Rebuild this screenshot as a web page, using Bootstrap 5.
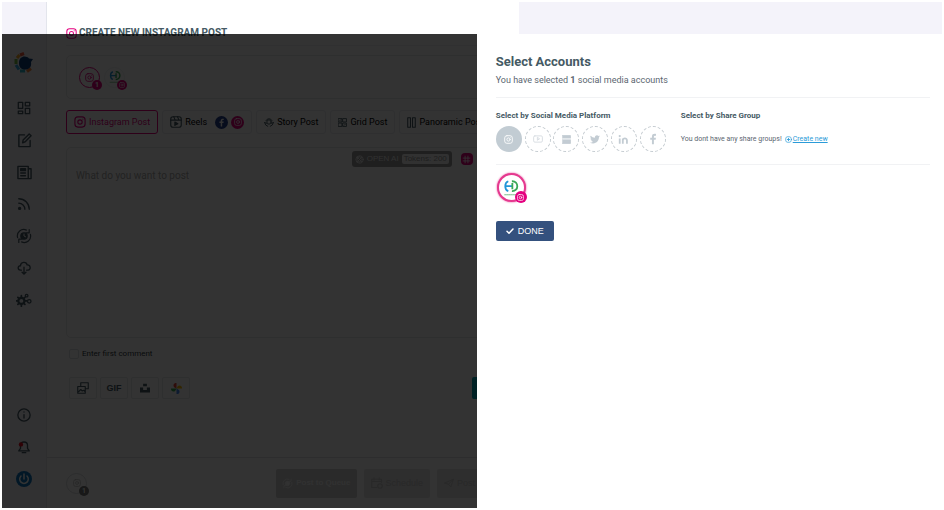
<!DOCTYPE html>
<html lang="en">
<head>
<meta charset="utf-8">
<meta name="viewport" content="width=device-width, initial-scale=1">
<title>Create new Instagram post</title>
<link href="https://cdn.jsdelivr.net/npm/bootstrap@5.3.0/dist/css/bootstrap.min.css" rel="stylesheet">
<style>
:root{--ink:#455a64;--pink:#e4007f;--line:#e6e8ea;--pale:#c3ccd3}
body{font-family:Roboto,"Liberation Sans",sans-serif;font-size:9px;color:#5b6670;padding:2px;background:#fff;line-height:12px}
svg{display:block;fill:none;stroke:currentColor;stroke-width:1.5;stroke-linecap:round;stroke-linejoin:round;flex:none}
button{font:inherit}
.shell{min-height:calc(100vh - 4px);background:#f4f3fa}
.side{width:44px;flex:none;padding:50px 0 13px;color:var(--ink)}
.side a{color:inherit;height:32px;width:100%}
.side .brandmark{height:22px;margin-bottom:18px}
.composer{flex:0 0 50.3%;min-width:0;overflow:hidden;background:#fff;border-left:1px solid #e3e5ec;padding:24px 0 0 19px}
.page-title{font-size:10px;line-height:14px;font-weight:700;color:var(--ink);margin:0;gap:2px;padding-bottom:5px;border-bottom:1px solid #f1f1f4}
.picked{height:44px;margin-top:9px;border:1px solid var(--line);border-radius:5px;padding:0 12px;gap:4px}
.ring{width:21px;height:21px;border:1px solid var(--pink);color:var(--pink);border-radius:50%}
.ring.plain{border-color:#eef0f2}
.dot{width:10px;height:10px;border-radius:50%;background:var(--pink);color:#fff;font-size:7px;line-height:10px;right:-3px;bottom:-3px}
.kinds{margin-top:11px;gap:4px}
.kind{height:24px;flex:none;border:1px solid #e9ebee;border-radius:3px;background:#fff;color:#000;padding:0 7px;gap:3px;white-space:nowrap}
.kind.on{border-color:var(--pink);color:var(--pink)}
.kind svg{color:var(--ink)}
.kind.on svg{color:var(--pink)}
.tag{width:13px;height:13px;border-radius:50%;background:var(--pink)}
.tag.fb{background:#25408f;margin-left:5px}
.kind .tag svg{color:#fff}
.editor{margin-top:13px;height:191px;border:1px solid var(--line);border-radius:5px}
.editor textarea{border:0;padding:22px 9px;font-size:10px;line-height:12px;resize:none;background:none;outline:0;color:#444}
.editor textarea::placeholder{color:#aaa;opacity:1}
.tools{right:45px;top:3px;gap:9px}
.ai{height:16px;border:0;border-radius:3px;background:#9a9a9a;color:#eee;padding:0 3px;gap:3px;font-family:"Liberation Sans",Arial,sans-serif;font-size:8px}
.tokens{background:#f4f4f4;color:#999;border-radius:2px;padding:0 2px;line-height:10px}
.hash{width:12px;height:12px;border:0;border-radius:4px;background:var(--pink);color:#fff}
.first{margin-top:10px;gap:3px;padding-left:3px;font-size:8px;color:#303a42}
.first input{width:10px;height:10px;margin:0;border:1px solid #dcdfe3;border-radius:2px;background:none}
.attach{margin-top:17px;gap:3px;padding-left:3px;color:var(--ink)}
.attach button{width:28px;height:22px;border:1px solid var(--line);border-radius:2px;background:#fff;color:inherit;font:bold 9px "Liberation Sans",Arial,sans-serif}
.attach .go{background:#00a3b4;border:0;width:47px;margin-left:auto}
.foot{border-top:1px solid #dfe1e5;height:51px;margin-left:-19px;padding-left:19px}
.foot .ring{border-color:#d9dcdf;color:#bbb}
.foot .dot{background:#777}
.send{gap:7px;margin-left:auto;width:243px;font-family:"Liberation Sans",Arial,sans-serif}
.send button{height:29px;border:0;border-radius:2px;background:#e4e4e4;color:#c7c7c7;gap:3px;flex:0 0 66px;white-space:nowrap}
.send .queue{background:#d0d0d0;color:#f4f4f4;flex-basis:81px;font-weight:bold;font-size:8px}
.shade{top:32px;left:0;right:0;bottom:0;background:rgba(0,0,0,.8)}
.drawer{top:32px;right:0;bottom:0;width:49.5%;background:#fff;padding:20px 12px 12px 19px}
.drawer h1{font-size:13px;line-height:16px;font-weight:700;color:var(--ink);margin:0 0 4px}
.drawer p{margin:0}
.drawer h2{font-size:8px;line-height:12px;font-weight:700;color:var(--ink);margin:0}
.rule{border-top:1px solid #f1f2f4}
.filters{margin-top:11px;padding:12px 0}
.platforms{width:170px;margin-top:4px}
.platforms button{width:26px;height:26px;border:1px dashed #c3cacf;border-radius:50%;background:none;color:var(--pale);padding:0}
.platforms .on{background:#c2ccd3;border:0;color:#fff}
.share{padding-left:15px}
.share p{font-size:7px;line-height:10px;margin-top:12px;gap:3px}
.share a{color:#2b9bd8;gap:1px}
.account{width:29px;height:29px;border:2px solid #e5398f;border-radius:50%;box-shadow:0 0 2px #e5398f;background:#fff;margin:8px 0 0 1px;padding:0}
.account .dot{width:12px;height:12px;right:-3px;bottom:-3px}
.done{height:20px;width:58px;border:0;border-radius:2px;background:#34517e;color:#fff;font-family:"Liberation Sans",Arial,sans-serif;margin-top:19px;gap:4px}
</style>
</head>
<body>
<svg class="d-none" aria-hidden="true">
<symbol id="ig" viewBox="0 0 16 16"><rect x="1.2" y="1.2" width="13.600" height="13.600" rx="4"/><circle cx="8" cy="8" r="2.900"/><circle cx="11.900" cy="4.100" r=".8" fill="currentColor" stroke="none"/></symbol>
<symbol id="fb" viewBox="0 0 16 16"><path d="M9.2 15V9h2.3l.4-2.6H9.2V5c0-.9.4-1.3 1.3-1.3H12V1.3C9 .7 6.600 1.600 6.600 4.500v1.900H4.300V9h2.300v6z" fill="currentColor" stroke="none"/></symbol>
<symbol id="hd" viewBox="0 0 20 20"><g stroke-width="2" stroke-linecap="butt"><path d="M7 2.500C2.500 4 2.500 12 7 13.500M4 8h8" stroke="#2196d8"/><path d="M11.500 4.500v7M11 2.500c8-.5 8 11.500 0 11" stroke="#3aa857"/></g><path d="M3 17.500h14" stroke="#7cc08c" stroke-width="1.200" stroke-dasharray="1.500 .8"/></symbol>
<symbol id="cycle" viewBox="0 0 20 20"><path d="M2 12A8 8 0 0 1 13 2.600M18 8A8 8 0 0 1 7 17.400M16.500 2v4h-4M3.500 18v-4h4"/><circle cx="10" cy="10" r="4" fill="currentColor"/><path d="M10 7.500V10l2 1" stroke="#fff" stroke-width="1.200"/></symbol>
</svg>
<div class="shell position-relative d-flex overflow-hidden">
<nav class="side d-flex flex-column" aria-label="Main">
<a href="#" class="brandmark d-flex justify-content-center align-items-center" aria-label="Home"><svg width="20" height="22" viewBox="0 0 20 22"><g stroke-width="3" stroke-linecap="butt"><path d="M3 6l2.500-3" stroke="#f5a623"/><path d="M6 3l4-1.500" stroke="#f0563a"/><path d="M2 7v5" stroke="#76b843"/><path d="M2 13l3 4.500" stroke="#35a8df"/><path d="M6 19h5" stroke="#2db5c8"/><path d="M13 19.500l4-3" stroke="#f0833a"/></g><path d="M5 11C5 4 12 3 15 6.500l4 .5-2 3c1 6-3 7.500-6 7.500s-6-1.500-6-6.500z" fill="#0b3e79" stroke="none"/></svg></a>
<a href="#" class="d-flex justify-content-center align-items-center" aria-label="Dashboard"><svg width="14" height="14" viewBox="0 0 16 16"><path d="M1.500 1.500h5v7h-5zM9.500 1.500h5v4h-5zM1.500 11.500h5v3h-5zM9.500 8.500h5v6h-5z"/></svg></a>
<a href="#" class="d-flex justify-content-center align-items-center" aria-label="Compose"><svg width="15" height="15" viewBox="0 0 16 16"><path d="M8 2H2v12.500h12V8M6 10.500l.5-3L13 1l2 2-6.500 6.500z"/></svg></a>
<a href="#" class="d-flex justify-content-center align-items-center" aria-label="Posts"><svg width="15" height="15" viewBox="0 0 16 16"><path d="M1 1.500h11v13H1zM12 4h3v10.500h-3M4 8.500h5M4 11.500h5"/><path d="M4 4h5v2H4z" fill="currentColor"/></svg></a>
<a href="#" class="d-flex justify-content-center align-items-center" aria-label="Feeds"><svg width="14" height="14" viewBox="0 0 16 16" stroke-width="2"><circle cx="3" cy="13" r="1.200" fill="currentColor"/><path d="M2 7a7 7 0 0 1 7 7M2 2a12 12 0 0 1 12 12"/></svg></a>
<a href="#" class="d-flex justify-content-center align-items-center" aria-label="Recurring"><svg width="16" height="16"><use href="#cycle"/></svg></a>
<a href="#" class="d-flex justify-content-center align-items-center" aria-label="Import"><svg width="14" height="14" viewBox="0 0 16 16"><path d="M5 10.500H4C0 10 1 5 4 5.500 4 1 11 0 11.500 4.500c4-.5 5 5.500 1 6H11M8 7v8M5.800 12.800 8 15l2.200-2.200"/></svg></a>
<a href="#" class="d-flex justify-content-center align-items-center" aria-label="Settings"><svg width="16" height="14" viewBox="0 0 18 16"><circle cx="6" cy="9" r="3.500" stroke-width="2.500"/><path d="M6 3v2M6 13v2M0 9h2M10 9h2M2 5l1.500 1.500M8.500 11.500 10 13M10 5 8.500 6.500M3.500 11.500 2 13" stroke-width="2"/><circle cx="15" cy="9.500" r="2"/><circle cx="12" cy="3" r="1.500"/></svg></a>
<a href="#" class="d-flex justify-content-center align-items-center mt-auto" aria-label="Information"><svg width="14" height="14" viewBox="0 0 16 16"><circle cx="8" cy="8" r="7"/><path d="M8 7.500v4M8 4.500v.1"/></svg></a>
<a href="#" class="d-flex justify-content-center align-items-center" aria-label="Notifications"><svg width="14" height="14" viewBox="0 0 16 16"><path d="M2 12.500h12l-2-3V6c0-5-8-5-8 0v3.500zM6 14.500h4"/><circle cx="4.500" cy="5" r="2.500" fill="#e80d20" stroke="none"/></svg></a>
<a href="#" class="d-flex justify-content-center align-items-center" aria-label="Account"><svg width="16" height="16" viewBox="0 0 16 16"><circle cx="8" cy="8" r="8" fill="#0a75bd" stroke="none"/><path d="M5 5a4.300 4.300 0 1 0 6 0M8 3v5" stroke="#fff"/></svg></a>
</nav>
<main class="composer d-flex flex-column">
<h2 class="page-title d-flex align-items-center"><svg width="11" height="11" color="#e4007f"><use href="#ig"/></svg>CREATE NEW INSTAGRAM POST</h2>
<div class="picked d-flex align-items-center">
<span class="ring position-relative d-flex justify-content-center align-items-center"><svg width="9" height="9"><use href="#ig"/></svg><b class="dot position-absolute text-center">1</b></span>
<span class="ring plain position-relative d-flex justify-content-center align-items-center"><svg width="14" height="14"><use href="#hd"/></svg><span class="dot position-absolute d-flex justify-content-center align-items-center"><svg width="6" height="6"><use href="#ig"/></svg></span></span>
</div>
<div class="kinds d-flex">
<button class="kind on d-flex align-items-center"><svg width="12" height="12"><use href="#ig"/></svg>Instagram Post</button>
<button class="kind d-flex align-items-center"><svg width="12" height="12" viewBox="0 0 16 16"><rect x="1" y="1" width="14" height="14" rx="3"/><path d="M1 5.500h14M5 1l2 4.500M10 1l2 4.500"/><path d="M6.500 8v4.500l4-2.200z" fill="currentColor"/></svg>Reels<span class="tag fb d-flex justify-content-center align-items-center"><svg width="9" height="9"><use href="#fb"/></svg></span><span class="tag d-flex justify-content-center align-items-center"><svg width="8" height="8"><use href="#ig"/></svg></span></button>
<button class="kind d-flex align-items-center"><svg width="10" height="10" viewBox="0 0 16 16"><circle cx="8" cy="8" r="3.500"/><path d="M3 6a5.500 5.500 0 0 1 10 0M1 9a7 7 0 0 0 5 6M15 9a7 7 0 0 1-5 6M1 9l3 1M15 9l-3 1"/></svg>Story Post</button>
<button class="kind d-flex align-items-center"><svg width="9" height="9" viewBox="0 0 16 16"><path d="M1 1h6v6H1zM9 1h6v6H9zM1 9h6v6H1zM9 9h6v6H9zM3 5l2-2M11 13l2-2"/></svg>Grid Post</button>
<button class="kind d-flex align-items-center"><svg width="9" height="11" viewBox="0 0 13 16"><path d="M1 1h4v14H1zM8 1h4v14H8z"/></svg>Panoramic Post</button>
</div>
<div class="editor position-relative">
<textarea class="w-100 h-100" aria-label="Post text" placeholder="What do you want to post"></textarea>
<div class="tools position-absolute d-flex align-items-center">
<button class="ai d-flex align-items-center"><svg width="9" height="9" viewBox="0 0 16 16"><circle cx="8" cy="8" r="6.500"/><path d="M4 4l8 8M12 4l-8 8M8 3l4 5-4 5-4-5z"/></svg>OPEN AI <span class="tokens">Tokens: 200</span></button>
<button class="hash d-flex justify-content-center align-items-center p-0" aria-label="Hashtags"><svg width="9" height="9" viewBox="0 0 16 16" stroke-width="2"><path d="M5.500 2v12M10.500 2v12M2 5.500h12M2 10.500h12"/></svg></button>
</div>
</div>
<label class="first d-flex align-items-center"><input type="checkbox" class="form-check-input">Enter first comment</label>
<div class="attach d-flex">
<button class="d-flex justify-content-center align-items-center p-0" aria-label="Add media"><svg width="12" height="12" viewBox="0 0 16 16"><path d="M5 5V1h10v8h-3M1 6h10v9H1zM2 13l3-3 2 2 2-1 2 2"/></svg></button>
<button class="p-0">GIF</button>
<button class="d-flex justify-content-center align-items-center p-0" aria-label="Unsplash"><svg width="10" height="10" viewBox="0 0 16 16"><path d="M5 1h6v4H5zM0 7h5v4h6V7h5v8H0z" fill="currentColor" stroke="none"/></svg></button>
<button class="d-flex justify-content-center align-items-center p-0" aria-label="Google Photos"><svg width="11" height="11" viewBox="0 0 16 16"><g stroke="none"><path d="M8 8V0C3 0 3 4 4.500 6z" fill="#ea4335"/><path d="M8 8h8c0-5-4-5-6-3.500z" fill="#fbbc04"/><path d="M8 8v8c5 0 5-4 3.500-6z" fill="#4285f4"/><path d="M8 8H0c0 5 4 5 6 3.500z" fill="#34a853"/></g></svg></button>
<button class="go" aria-label="Preview"></button>
</div>
<div class="foot d-flex align-items-center mt-auto">
<span class="ring position-relative d-flex justify-content-center align-items-center"><svg width="8" height="8"><use href="#ig"/></svg><b class="dot position-absolute text-center">1</b></span>
<div class="send d-flex">
<button class="queue d-flex justify-content-center align-items-center p-0"><svg width="11" height="11"><use href="#cycle"/></svg>Post to Queue</button>
<button class="d-flex justify-content-center align-items-center p-0"><svg width="12" height="12" viewBox="0 0 16 16"><path d="M8 14H1V3h13v4M1 6h13M4 1v3M11 1v3"/><circle cx="12" cy="12" r="3"/></svg>Schedule</button>
<button class="d-flex justify-content-center align-items-center p-0"><svg width="10" height="10" viewBox="0 0 16 16"><path d="M1 8l14-6-4 12-4-4zM7 10l8-8"/></svg>Post Now</button>
</div>
</div>
</main>
<div class="shade position-absolute"></div>
<aside class="drawer position-absolute" aria-labelledby="drawer-title">
<h1 id="drawer-title">Select Accounts</h1>
<p>You have selected <b>1</b> social media accounts</p>
<div class="rule filters d-flex">
<section><h2>Select by Social Media Platform</h2>
<div class="platforms d-flex justify-content-between">
<button class="on d-flex justify-content-center align-items-center" aria-label="Instagram"><svg width="9" height="9"><use href="#ig"/></svg></button>
<button class="d-flex justify-content-center align-items-center" aria-label="YouTube"><svg width="10" height="8" viewBox="0 0 16 12" opacity=".65"><rect x="1" y="1" width="14" height="10" rx="2"/><path d="M7 4v4l3-2z"/></svg></button>
<button class="d-flex justify-content-center align-items-center" aria-label="Google Business"><svg width="9" height="9" viewBox="0 0 16 16"><path d="M1 1h14v5H1zM1 8h14v7H1z" fill="currentColor"/><path d="M1 7h14" stroke="#fff"/></svg></button>
<button class="d-flex justify-content-center align-items-center" aria-label="Twitter"><svg width="10" height="10" viewBox="0 0 16 16"><path d="M5 15c6 0 9.300-5 9.300-9.300v-.4A6.600 6.600 0 0 0 16 3.500a6.500 6.500 0 0 1-1.900.5A3.300 3.300 0 0 0 15.500 2.200a6.500 6.500 0 0 1-2 .8A3.300 3.300 0 0 0 7.900 6 9.300 9.300 0 0 1 1.100 2.600a3.300 3.300 0 0 0 1 4.400 3.200 3.200 0 0 1-1.500-.4 3.300 3.300 0 0 0 2.600 3.200 3.300 3.300 0 0 1-1.400.1 3.300 3.300 0 0 0 3 2.300A6.600 6.600 0 0 1 0 13.500 9.300 9.300 0 0 0 5 15" fill="currentColor" stroke="none"/></svg></button>
<button class="d-flex justify-content-center align-items-center" aria-label="LinkedIn"><svg width="11" height="11" viewBox="0 0 16 16"><path d="M2.500 6.500V14M7 6.500V14M7 9.500c0-4 6-4 6 0V14" stroke-width="2.600" stroke-linecap="butt"/><circle cx="2.500" cy="3" r="1.600" fill="currentColor" stroke="none"/></svg></button>
<button class="d-flex justify-content-center align-items-center" aria-label="Facebook"><svg width="12" height="12"><use href="#fb"/></svg></button>
</div></section>
<section class="share"><h2>Select by Share Group</h2>
<p class="d-flex align-items-center">You dont have any share groups! <a href="#" class="d-flex align-items-center"><svg width="7" height="7" viewBox="0 0 16 16"><circle cx="8" cy="8" r="7"/><path d="M8 5v6M5 8h6" stroke-width="2"/></svg>Create new</a></p></section>
</div>
<div class="rule"><button class="account position-relative d-flex justify-content-center align-items-center" aria-label="Selected Instagram account"><svg width="18" height="18"><use href="#hd"/></svg><span class="dot position-absolute d-flex justify-content-center align-items-center"><svg width="7" height="7"><use href="#ig"/></svg></span></button></div>
<button class="done d-flex justify-content-center align-items-center p-0"><svg width="8" height="8" viewBox="0 0 16 16"><path d="M2 8.500 6 12.500 14 4" stroke-width="3"/></svg>DONE</button>
</aside>
</div>
<script src="https://cdn.jsdelivr.net/npm/bootstrap@5.3.0/dist/js/bootstrap.bundle.min.js"></script>
</body>
</html>
